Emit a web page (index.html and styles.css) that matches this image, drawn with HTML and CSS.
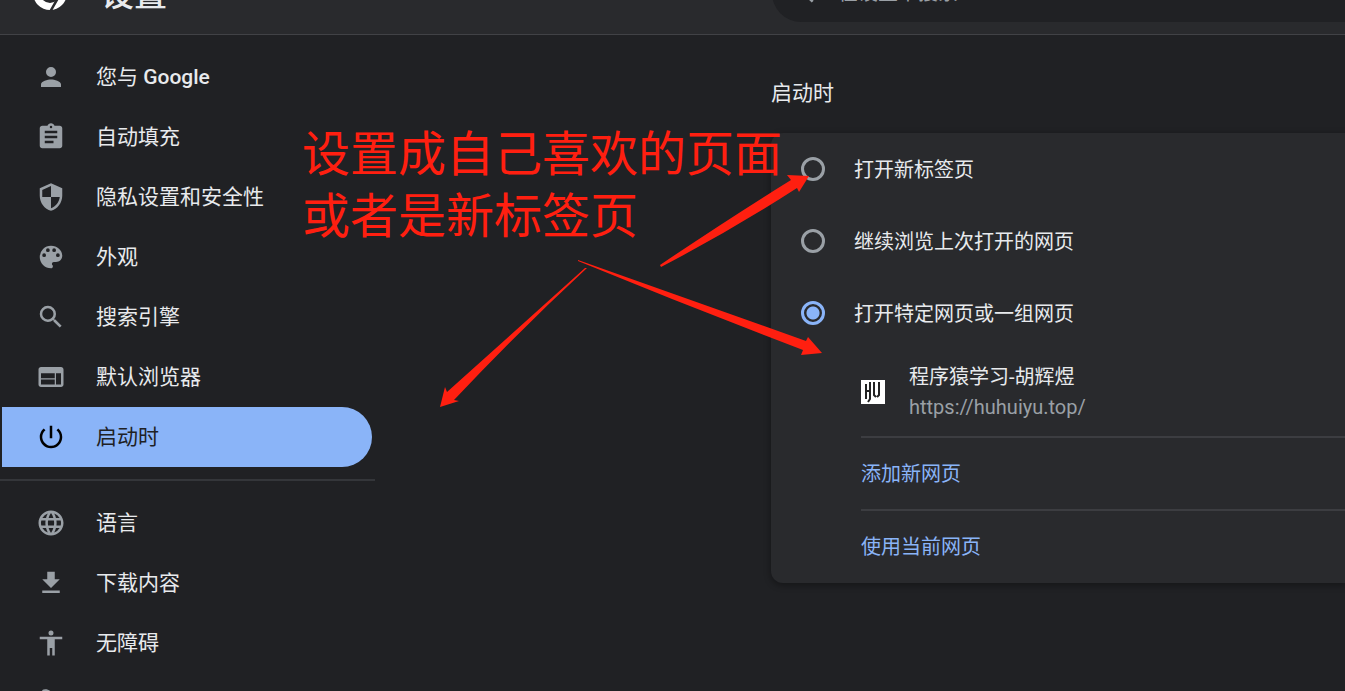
FILE: index.html
```html
<!DOCTYPE html>
<html lang="zh-CN">
<head>
<meta charset="utf-8">
<title>设置</title>
<link rel="stylesheet" href="styles.css">
</head>
<body>
<header class="toolbar">
  <div class="brand">
    <svg class="logo" viewBox="0 0 36 36" aria-hidden="true">
      <circle cx="18" cy="18" r="17" fill="#fff"/>
      <circle cx="18" cy="18" r="10" fill="#292a2d"/>
      <circle cx="18" cy="18" r="7" fill="#fff"/>
      <path d="M18 9H34M10 23L3 10M26 23L18 37" stroke="#292a2d" stroke-width="2.500" fill="none"/>
    </svg>
    <h1 class="title">设置</h1>
  </div>
  <label class="search">
    <svg class="search-icon" viewBox="0 0 24 24" aria-hidden="true"><path d="M15.500 14h-.79l-.28-.27A6.470 6.470 0 0 0 16 9.500 6.500 6.500 0 1 0 9.500 16c1.610 0 3.090-.59 4.230-1.570l.27.28v.79l5 4.990L20.490 19l-4.990-5zm-6 0a4.500 4.500 0 1 1 0-9 4.500 4.500 0 0 1 0 9z"/></svg>
    <input class="search-input" type="search" placeholder="在设置中搜索" aria-label="在设置中搜索">
  </label>
</header>
<div class="page">
  <nav class="sidebar">
    <a class="item" href="#people"><svg class="icon" viewBox="0 0 24 24"><path d="M12 12a4 4 0 1 0 0-8 4 4 0 0 0 0 8zm0 2c-2.670 0-8 1.340-8 4v2h16v-2c0-2.660-5.330-4-8-4z"/></svg><span class="item-label">您与 <b class="item-strong">Google</b></span></a>
    <a class="item" href="#autofill"><svg class="icon" viewBox="0 0 24 24"><path d="M19 3h-4.180C14.400 1.840 13.300 1 12 1s-2.400.84-2.820 2H5c-1.100 0-2 .9-2 2v14c0 1.100.9 2 2 2h14c1.100 0 2-.9 2-2V5c0-1.100-.9-2-2-2zm-7 0a1 1 0 1 1 0 2 1 1 0 0 1 0-2zm2 14H7v-2h7v2zm3-4H7v-2h10v2zm0-4H7V7h10v2z"/></svg><span class="item-label">自动填充</span></a>
    <a class="item" href="#privacy"><svg class="icon" viewBox="0 0 24 24"><path d="M12 1L3 5v6c0 5.550 3.840 10.740 9 12 5.160-1.260 9-6.450 9-12V5l-9-4zm0 10.990h7c-.53 4.120-3.280 7.790-7 8.940V12H5V6.300l7-3.110v8.800z"/></svg><span class="item-label">隐私设置和安全性</span></a>
    <a class="item" href="#appearance"><svg class="icon" viewBox="0 0 24 24"><path d="M12 3a9 9 0 0 0 0 18c.83 0 1.500-.67 1.500-1.500 0-.39-.15-.74-.39-1.010-.23-.26-.38-.61-.38-.99 0-.83.67-1.500 1.500-1.500H16c2.760 0 5-2.240 5-5 0-4.420-4.030-8-9-8zm-5.500 9a1.500 1.500 0 1 1 0-3 1.500 1.500 0 0 1 0 3zm3-4a1.500 1.500 0 1 1 0-3 1.500 1.500 0 0 1 0 3zm5 0a1.500 1.500 0 1 1 0-3 1.500 1.500 0 0 1 0 3zm3 4a1.500 1.500 0 1 1 0-3 1.500 1.500 0 0 1 0 3z"/></svg><span class="item-label">外观</span></a>
    <a class="item" href="#search"><svg class="icon" viewBox="0 0 24 24"><path d="M15.500 14h-.79l-.28-.27A6.470 6.470 0 0 0 16 9.500 6.500 6.500 0 1 0 9.500 16c1.610 0 3.090-.59 4.230-1.570l.27.28v.79l5 4.990L20.490 19l-4.990-5zm-6 0a4.500 4.500 0 1 1 0-9 4.500 4.500 0 0 1 0 9z"/></svg><span class="item-label">搜索引擎</span></a>
    <a class="item" href="#default"><svg class="icon" viewBox="0 0 24 24"><path d="M20 4H4c-1.100 0-1.990.9-1.990 2L2 18c0 1.100.9 2 2 2h16c1.100 0 2-.9 2-2V6c0-1.100-.9-2-2-2zm-5 14H4v-4h11v4zm0-5H4V9h11v4zm5 5h-4V9h4v9z"/></svg><span class="item-label">默认浏览器</span></a>
    <a class="item item-active" href="#startup" aria-current="page"><svg class="icon" viewBox="0 0 24 24"><path d="M13 3h-2v10h2V3zm4.830 2.170l-1.420 1.420A6.920 6.920 0 0 1 19 12a7 7 0 1 1-11.420-5.420L6.170 5.170A8.932 8.932 0 0 0 3 12a9 9 0 0 0 18 0c0-2.740-1.230-5.180-3.170-6.830z"/></svg><span class="item-label">启动时</span></a>
    <hr class="rule">
    <a class="item" href="#languages"><svg class="icon" viewBox="0 0 24 24"><path d="M11.990 2C6.470 2 2 6.480 2 12s4.470 10 9.990 10C17.520 22 22 17.520 22 12S17.520 2 11.990 2zm6.930 6h-2.950a15.650 15.650 0 0 0-1.380-3.560A8.030 8.030 0 0 1 18.920 8zM12 4.040c.83 1.200 1.480 2.530 1.910 3.960h-3.820c.43-1.430 1.080-2.760 1.910-3.960zM4.260 14C4.100 13.360 4 12.690 4 12s.1-1.360.26-2h3.380c-.08.66-.14 1.320-.14 2s.06 1.340.14 2H4.260zm.82 2h2.950c.32 1.250.78 2.450 1.380 3.560A7.987 7.987 0 0 1 5.080 16zm2.950-8H5.080a7.987 7.987 0 0 1 4.330-3.560A15.650 15.650 0 0 0 8.030 8zM12 19.960c-.83-1.200-1.480-2.530-1.910-3.960h3.820c-.43 1.430-1.080 2.760-1.910 3.960zM14.340 14H9.660c-.09-.66-.16-1.320-.16-2s.07-1.350.16-2h4.680c.09.65.16 1.320.16 2s-.07 1.340-.16 2zm.25 5.560c.6-1.110 1.060-2.310 1.380-3.560h2.950a8.030 8.030 0 0 1-4.330 3.560zM16.360 14c.08-.66.14-1.320.14-2s-.06-1.340-.14-2h3.380c.16.64.26 1.310.26 2s-.1 1.360-.26 2h-3.380z"/></svg><span class="item-label">语言</span></a>
    <a class="item" href="#downloads"><svg class="icon" viewBox="0 0 24 24"><path d="M19 9h-4V3H9v6H5l7 7 7-7zM5 18v2h14v-2H5z"/></svg><span class="item-label">下载内容</span></a>
    <a class="item" href="#accessibility"><svg class="icon" viewBox="0 0 24 24"><path d="M12 2a2 2 0 1 1 0 4 2 2 0 0 1 0-4zm9 7h-6v13h-2v-6h-2v6H9V9H3V7h18v2z"/></svg><span class="item-label">无障碍</span></a>
    <a class="item" href="#system" aria-label="系统"><svg class="icon" viewBox="0 0 24 24"><path d="M22.700 19l-9.100-9.100c.9-2.300.4-5-1.500-6.900-2-2-5-2.400-7.400-1.300L9 6 6 9 1.600 4.700C.4 7.100.9 10.100 2.900 12.100c1.900 1.900 4.600 2.400 6.900 1.500l9.100 9.100c.4.4 1 .4 1.400 0l2.300-2.300c.5-.4.5-1.100.1-1.400z"/></svg></a>
  </nav>
  <main class="main">
    <h2 class="section-title">启动时</h2>
    <section class="card">
      <label class="option"><input class="radio" type="radio" name="startup"><span class="option-label">打开新标签页</span></label>
      <label class="option"><input class="radio" type="radio" name="startup"><span class="option-label">继续浏览上次打开的网页</span></label>
      <label class="option"><input class="radio" type="radio" name="startup" checked><span class="option-label">打开特定网页或一组网页</span></label>
      <div class="pages">
        <div class="site">
          <svg class="favicon" viewBox="0 0 24 24" aria-hidden="true"><path fill="#fff" d="M0 0h24v24H0z"/><path d="M5 4v15M9 2v17l-2 3M5 11h4M13 2v13l2 2M18 2v13l-2 2" fill="none" stroke="#222" stroke-width="2"/></svg>
          <div class="site-text"><div class="site-name">程序猿学习-胡辉煜</div><div class="site-url">https://huhuiyu.top/</div></div>
        </div>
        <button class="action" type="button">添加新网页</button>
        <button class="action" type="button">使用当前网页</button>
      </div>
    </section>
  </main>
</div>
<div class="annotation">
  <svg class="arrows" width="860" height="420" viewBox="0 0 860 420" aria-hidden="true">
    <path d="M660 265Q728 219 791 180L787 175L809 176L799 192L797 188Q732 230 661 267Z"/>
    <path d="M578 260L806 341L808 337L822 353L801 355L803 350Q690 307 578 261Z"/>
    <path d="M585 268L447 392L445 387L440 407L459 401L454 400Q520 330 587 268Z"/>
  </svg>
  <p class="note">设置成自己喜欢的页面<br>或者是新标签页</p>
</div>
</body>
</html>
```
FILE: styles.css
```css
* { box-sizing: border-box; }

body {
  margin: 0;
  height: 100vh;
  overflow: hidden;
  position: relative;
  background: #202124;
  color: #e8eaed;
  font-family: Roboto, "Noto Sans CJK SC", sans-serif;
  font-size: 20px;
}

/* The toolbar is partly scrolled out above the window. */
.toolbar {
  display: flex;
  align-items: center;
  height: 84px;
  margin-top: -49px;
  background: #292a2d;
  border-bottom: 1px solid #414246;
}

.brand {
  display: flex;
  align-items: center;
  flex: 0 0 772px;
  gap: 33px;
  padding-left: 32px;
}

.logo { width: 36px; height: 36px; }

.title {
  margin: 0;
  padding-top: 4px;
  font-size: 33px;
  line-height: 40px;
  font-weight: 500;
}

.search {
  display: flex;
  align-items: center;
  flex: 1;
  gap: 20px;
  height: 58px;
  padding-left: 16px;
  border-radius: 29px 0 0 29px;
  background: #202124;
}

.search-icon {
  width: 30px;
  height: 30px;
  margin-bottom: 2px;
  fill: #9aa0a6;
}

.search-input {
  flex: 1;
  height: 30px;
  border: 0;
  padding: 0;
  outline: 0;
  background: none;
  color: #e8eaed;
  font: inherit;
}

.search-input::placeholder { color: #9aa0a6; }

.page { display: flex; }

.sidebar {
  flex: 0 0 375px;
  padding-top: 12px;
  font-size: 21px;
}

.item {
  display: flex;
  align-items: center;
  gap: 30px;
  height: 60px;
  margin: 0 3px 0 2px;
  padding-left: 34px;
  border-radius: 0 30px 30px 0;
  color: inherit;
  text-decoration: none;
}

.item-label { padding-bottom: 4px; }
.item-strong { font-weight: 500; }
.icon { width: 30px; height: 30px; fill: #9aa0a6; }
.item-active { background: #8ab4f8; color: #202124; }
.item-active .icon { fill: #000; }

.rule {
  margin: 12px 0;
  border: 0;
  border-top: 2px solid #34363a;
}

.main { flex: 1; padding: 42px 0 0 396px; }

.section-title {
  margin: 0 0 24px;
  font-size: 21px;
  line-height: 32px;
  font-weight: 400;
}

.card {
  background: #292a2d;
  border-radius: 12px 0 0 12px;
  box-shadow: 0 2px 6px 1px rgba(0, 0, 0, 0.3);
}

.option {
  display: flex;
  align-items: center;
  gap: 29px;
  height: 72px;
  padding-left: 30px;
}

.option-label { padding-bottom: 2px; }

.radio {
  appearance: none;
  width: 24px;
  height: 24px;
  margin: 0;
  border: 3px solid #9aa0a6;
  border-radius: 50%;
}

.radio:checked {
  border-color: #8ab4f8;
  background: radial-gradient(circle, #8ab4f8 6px, transparent 7px);
}

.pages { padding: 0 0 1px 90px; }

.site {
  display: flex;
  align-items: center;
  gap: 24px;
  height: 87px;
  padding-bottom: 2px;
}

.favicon { width: 24px; height: 24px; }
.site-text { line-height: 30px; }
.site-url { color: #9aa0a6; }

.action {
  display: block;
  width: 100%;
  height: 73px;
  padding: 0 0 2px;
  border: 0;
  border-top: 2px solid #3c3d41;
  background: none;
  color: #8ab4f8;
  font: inherit;
  text-align: left;
}

/* Hand-drawn notes laid over the page. */
.annotation {
  position: absolute;
  top: 0;
  left: 0;
  color: #ff1f10;
  pointer-events: none;
}

.arrows { display: block; fill: currentColor; }

.note {
  position: absolute;
  top: 124px;
  left: 302px;
  margin: 0;
  font-size: 48px;
  line-height: 62px;
  white-space: nowrap;
}
```
